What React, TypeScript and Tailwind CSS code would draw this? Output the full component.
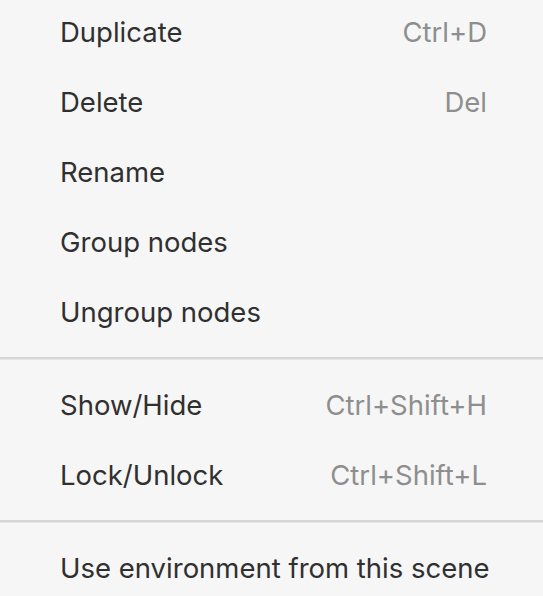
type MenuItem = { label: string; shortcut?: string }

const groups: MenuItem[][] = [
  [
    { label: 'Duplicate', shortcut: 'Ctrl+D' },
    { label: 'Delete', shortcut: 'Del' },
    { label: 'Rename' },
    { label: 'Group nodes' },
    { label: 'Ungroup nodes' },
  ],
  [
    { label: 'Show/Hide', shortcut: 'Ctrl+Shift+H' },
    { label: 'Lock/Unlock', shortcut: 'Ctrl+Shift+L' },
  ],
  [{ label: 'Use environment from this scene' }],
]

function Row({ item }: { item: MenuItem }) {
  return (
    <div className="flex h-[70px] items-center justify-between whitespace-nowrap pl-[60px] pr-[56px]">
      <span className="text-[#303030]">{item.label}</span>
      {item.shortcut && <span className="text-[#8e8e8e]">{item.shortcut}</span>}
    </div>
  )
}

export default function App() {
  return (
    <div className="h-[596px] w-[543px] overflow-hidden bg-[#f6f6f6] font-['Inter',sans-serif] text-[27.5px] leading-none">
      <div className="-mt-[2px]">
        {groups.map((group, i) => (
          <div key={i}>
            {i > 0 && <div className="mt-[9px] mb-[11px] h-[3px] border-t-2 border-b border-t-[#d6d6d6] border-b-[#e6e6e6]" />}
            {group.map((item) => (
              <Row key={item.label} item={item} />
            ))}
          </div>
        ))}
      </div>
    </div>
  )
}
